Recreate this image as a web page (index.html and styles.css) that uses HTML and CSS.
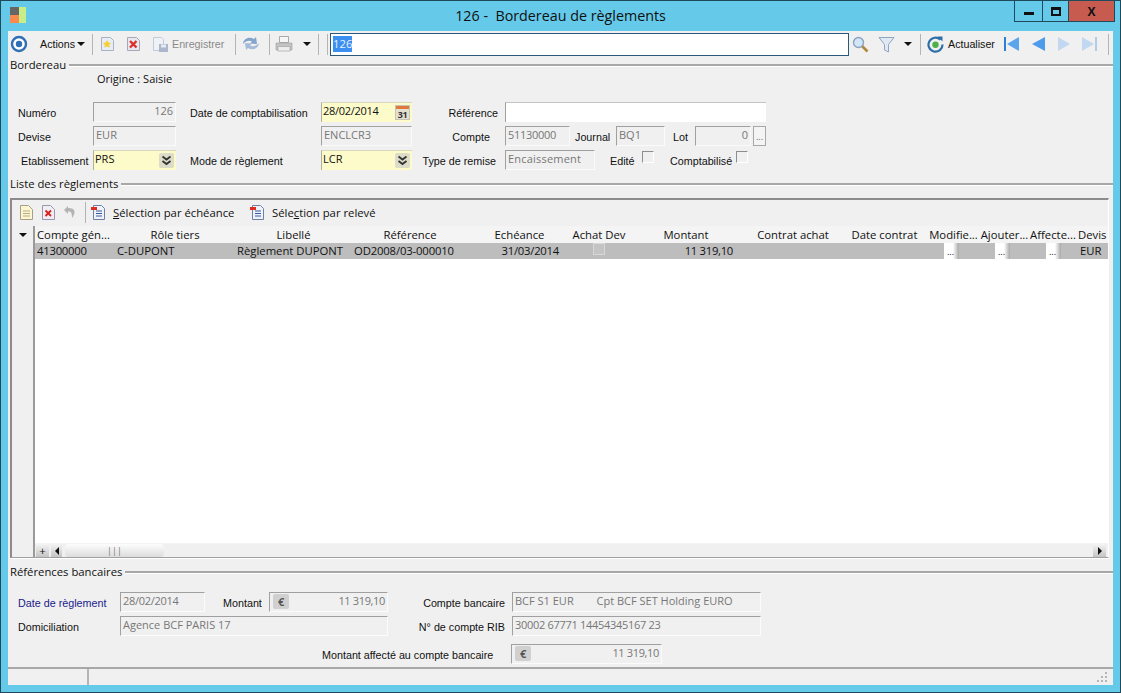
FILE: index.html
```html
<!DOCTYPE html>
<html lang="fr">

<head>
    <meta charset="UTF-8">
    <title>Bordereau de règlements</title>
    <link rel="stylesheet" href="styles.css">
</head>

<body>
    <div class="window">
        <!-- Title bar -->
        <header class="titlebar">
            <div class="logo"><span class="logo-a"></span><span class="logo-b"></span><span class="logo-c"></span></div>
            <div class="title">126 -&nbsp; Bordereau de règlements</div>
            <div class="controls">
                <div class="ctl ctl-min"><span></span></div>
                <div class="ctl ctl-max"><span></span></div>
                <div class="ctl ctl-close">X</div>
            </div>
        </header>

        <div class="client">
            <!-- Main toolbar -->
            <div class="toolbar">
                <svg class="ic i-target" width="18" height="18" viewBox="0 0 18 18"><circle cx="9" cy="9" r="7" fill="#fff" stroke="#2f6fb5" stroke-width="2.4"/><circle cx="9" cy="9" r="3.2" fill="#2f6fb5"/></svg>
                <span class="tb-text m-actions">Actions</span>
                <span class="caret m-caret1"></span>
                <span class="sep m-sep1"></span>
                <svg class="m-new" width="15" height="16" viewBox="0 0 15 16"><path d="M1.500 1.500h9l3 3v10h-12z" fill="#e8edf5" stroke="#a9b2c2"/><path d="M7 4l1.400 2.600 2.800.4-2 2 .5 2.800L7 10.500 4.300 11.800l.5-2.800-2-2 2.800-.4z" fill="#f5cf3a"/></svg>
                <svg class="m-del" width="15" height="16" viewBox="0 0 15 16"><path d="M1.500 1.500h9l3 3v10h-12z" fill="#e8e6ee" stroke="#a9a6b8"/><path d="M4 5l6.500 6.500M10.500 5L4 11.500" stroke="#d9302a" stroke-width="2.400"/></svg>
                <svg class="m-save" width="17" height="17" viewBox="0 0 17 17"><path d="M1.500 1.500h8l2 2v11h-10z" fill="#eef1f6" stroke="#c2cada"/><path d="M7 8h9v8H7z" fill="#a9b6cc"/><path d="M9 8.500h5v3H9z" fill="#e6ebf3"/></svg>
                <span class="tb-text off m-save-text">Enregistrer</span>
                <span class="sep m-sep2"></span>
                <svg class="m-sync" width="18" height="18" viewBox="0 0 18 18"><path d="M1 9c0-5 6-8 11-5l2-2 1 7-7-.5 2-2C7 5 4 6 1 9z" fill="#84a4cc"/><path d="M17 8c0 5-6 8-11 5l-2 2-1-7 7 .5-2 2c3 1.500 6 .5 9-2.500z" fill="#a5bcd8"/></svg>
                <span class="sep m-sep3"></span>
                <svg class="m-print" width="18" height="18" viewBox="0 0 18 18"><path d="M4.500 1.500h9v6h-9z" fill="#f6f6f6" stroke="#a8a8a8"/><path d="M1 8h16v7H1z" fill="#c4c4c4" stroke="#a0a0a0" stroke-width=".6"/><path d="M3 11.500h12v4.500H3z" fill="#ededed" stroke="#9c9c9c" stroke-width=".6"/></svg>
                <span class="caret m-caret2"></span>
                <span class="sep m-sep4"></span>
                <span class="sep m-sep5"></span>
                <div class="search"><span class="selected">126</span></div>
                <svg class="m-loupe" width="17" height="17" viewBox="0 0 17 17"><path d="M10 10l5.500 5.500" stroke="#b08a3a" stroke-width="2.600"/><circle cx="6.500" cy="6.500" r="5" fill="#d3e6f7" stroke="#8aa4bf" stroke-width="1.400"/></svg>
                <svg class="m-filter" width="17" height="17" viewBox="0 0 17 17"><path d="M1 1.500h15L10.500 8.500v7.500L6.500 14V8.500z" fill="#dfe8f3" stroke="#8fa6c2"/></svg>
                <span class="caret m-caret3"></span>
                <span class="sep m-sep6"></span>
                <svg class="m-refresh" width="17" height="17" viewBox="0 0 17 17"><path d="M13.500 3.800A7 7 0 1 0 15.500 8.500" fill="none" stroke="#2f6fa8" stroke-width="2.200"/><path d="M10.500 0.500h5v5z" fill="#2f6fa8"/><circle cx="8.500" cy="8.800" r="3.200" fill="#4fb04a"/></svg>
                <span class="tb-text m-refresh-text">Actualiser</span>
                <svg class="m-first" width="15" height="14" viewBox="0 0 15 14"><path d="M0 0h2v14H0z" fill="#2b7fd6"/><path d="M15 0v14L3 7z" fill="#5aa5ec"/></svg>
                <svg class="m-prev" width="13" height="14" viewBox="0 0 13 14"><path d="M13 0v14L0 7z" fill="#4d9bea"/></svg>
                <svg class="m-next" width="12" height="14" viewBox="0 0 12 14"><path d="M0 0v14l12-7z" fill="#c2d8f0"/></svg>
                <svg class="m-last" width="15" height="14" viewBox="0 0 15 14"><path d="M0 0v14l12-7z" fill="#c2d8f0"/><path d="M13 0h2v14h-2z" fill="#b2cbe8"/></svg>
                <span class="sep m-sep7"></span>
            </div>

            <!-- Bordereau -->
            <div class="legend"><span>Bordereau</span></div>
            <div class="origin">Origine : Saisie</div>
            <div class="form-grid">
                <label class="lbl">Numéro</label>
                <div class="field off right">126</div>
                <label class="lbl lbl-mid">Date de comptabilisation</label>
                <div class="field yellow num">28/02/2014
                    <svg class="cal" width="15" height="15" viewBox="0 0 15 15"><rect x="0.500" y="0.500" width="14" height="14" fill="#e4e0d0" stroke="#c8c4b4"/><rect x="1" y="1" width="13" height="3" fill="#e07a3c"/><text x="7.500" y="13" class="cal-num">31</text></svg>
                </div>
                <label class="lbl lbl-right">Référence</label>
                <div class="field white"></div>

                <label class="lbl">Devise</label>
                <div class="field off">EUR</div>
                <span></span>
                <div class="field off">ENCLCR3</div>
                <label class="lbl lbl-right lbl-compte">Compte</label>
                <div class="inline">
                    <div class="field off num w-compte">51130000</div>
                    <label class="lbl l-journal">Journal</label>
                    <div class="field off w-journal">BQ1</div>
                    <label class="lbl l-lot">Lot</label>
                    <div class="field off right w-lot">0</div>
                    <div class="dots-btn">...</div>
                </div>

                <label class="lbl lbl-etab">Etablissement</label>
                <div class="field yellow">PRS
                    <svg class="combo" width="15" height="15" viewBox="0 0 15 15"><rect width="15" height="15" rx="2" fill="#dcdcc8"/><path d="M3.500 3.500l4 3 4-3M3.500 8l4 3 4-3" fill="none" stroke="#333" stroke-width="1.800"/></svg>
                </div>
                <label class="lbl lbl-mid">Mode de règlement</label>
                <div class="field yellow">LCR
                    <svg class="combo" width="15" height="15" viewBox="0 0 15 15"><rect width="15" height="15" rx="2" fill="#dcdcc8"/><path d="M3.500 3.500l4 3 4-3M3.500 8l4 3 4-3" fill="none" stroke="#333" stroke-width="1.800"/></svg>
                </div>
                <label class="lbl lbl-right lbl-remise">Type de remise</label>
                <div class="inline">
                    <div class="field off w-remise">Encaissement</div>
                    <label class="lbl l-edite">Edité</label>
                    <span class="check"></span>
                    <label class="lbl l-compta">Comptabilisé</label>
                    <span class="check"></span>
                </div>
            </div>

            <!-- Liste des reglements -->
            <div class="legend legend-list"><span>Liste des règlements</span></div>
            <section class="list-frame">
                <div class="list-toolbar">
                    <svg class="l-new" width="13" height="15" viewBox="0 0 13 15"><path d="M.5.500h8l4 4v10H.5z" fill="#fdf6d0" stroke="#a5a08a"/><path d="M3 6h7M3 8.500h7M3 11h7" stroke="#b5ad88"/></svg>
                    <svg class="l-del" width="13" height="15" viewBox="0 0 13 15"><path d="M.5.500h8l4 4v10H.5z" fill="#f0eef4" stroke="#9a98aa"/><path d="M3.500 5.500l5.500 5.500M9 5.500L3.500 11" stroke="#d9201c" stroke-width="1.800"/></svg>
                    <svg class="l-undo" width="14" height="14" viewBox="0 0 14 14"><path d="M5 1L1 5l4 4V6.500c3-.5 4 1 4 6.500 4-5 4-10-4-10z" fill="#b4b4b4"/></svg>
                    <span class="sep l-sep"></span>
                    <svg class="l-sel1" width="15" height="15" viewBox="0 0 15 15"><path d="M2.500.5h8l3 3v11h-11z" fill="#eef2fa" stroke="#6f7fa6"/><path d="M5 6h6M5 8.500h6M5 11h6" stroke="#3c5a9a"/><path d="M0 2h6v3H0z" fill="#e02a22"/></svg>
                    <span class="list-btn l-t1"><u>S</u>élection par échéance</span>
                    <svg class="l-sel2" width="15" height="15" viewBox="0 0 15 15"><path d="M2.500.5h8l3 3v11h-11z" fill="#eef2fa" stroke="#6f7fa6"/><path d="M5 6h6M5 8.500h6M5 11h6" stroke="#3c5a9a"/><path d="M0 2h6v3H0z" fill="#e02a22"/></svg>
                    <span class="list-btn l-t2">Séle<u>c</u>tion par relevé</span>
                </div>

                <div class="list-body">
                    <div class="gutter"><span class="gutter-caret"></span></div>
                    <div class="table">
                        <div class="grid-row head">
                            <span class="c-left">Compte gén...</span>
                            <span>Rôle tiers</span>
                            <span>Libellé</span>
                            <span>Référence</span>
                            <span>Echéance</span>
                            <span>Achat Dev</span>
                            <span>Montant</span>
                            <span>Contrat achat</span>
                            <span>Date contrat</span>
                            <span>Modifie...</span>
                            <span>Ajouter...</span>
                            <span>Affecte...</span>
                            <span class="c-left">Devis</span>
                        </div>
                        <div class="grid-row line">
                            <span class="c-left c-num">41300000</span>
                            <span class="c-left c-tiers">C-DUPONT</span>
                            <span class="c-left c-lib">Règlement DUPONT</span>
                            <span class="c-left c-ref">OD2008/03-000010</span>
                            <span class="c-date">31/03/2014</span>
                            <span class="c-mid"><i class="check check-row"></i></span>
                            <span class="c-amount">11 319,10</span>
                            <span></span>
                            <span></span>
                            <span class="c-btn"><i class="cell-btn">...</i></span>
                            <span class="c-btn"><i class="cell-btn">...</i></span>
                            <span class="c-btn c-btn-last"><i class="cell-btn">...</i></span>
                            <span class="c-left c-eur">EUR</span>
                        </div>
                        <div class="table-empty"></div>
                        <div class="hscroll">
                            <span class="sb-btn sb-plus">+</span>
                            <span class="sb-btn sb-left"><i class="tri-left"></i></span>
                            <span class="sb-thumb">|||</span>
                            <span class="sb-btn sb-right"><i class="tri-right"></i></span>
                        </div>
                    </div>
                </div>
            </section>

            <!-- References bancaires -->
            <div class="legend legend-bank"><span>Références bancaires</span></div>
            <div class="bank-grid">
                <label class="lbl blue">Date de règlement</label>
                <div class="field off num">28/02/2014</div>
                <label class="lbl l-montant">Montant</label>
                <div class="field off right euro-field"><span class="euro">€</span>11 319,10</div>
                <label class="lbl lbl-right">Compte bancaire</label>
                <div class="field off">BCF S1 EUR &nbsp; &nbsp; &nbsp; &nbsp;Cpt BCF SET Holding EURO</div>

                <label class="lbl">Domiciliation</label>
                <div class="field off span-3">Agence BCF PARIS 17</div>
                <label class="lbl lbl-right">N° de compte RIB</label>
                <div class="field off num">30002 67771 14454345167 23</div>
            </div>
            <div class="bank-total">
                <label class="lbl">Montant affecté au compte bancaire</label>
                <div class="field off right euro-field w-total"><span class="euro">€</span>11 319,10</div>
            </div>

            <!-- Status bar -->
            <footer class="statusbar">
                <div class="status-cell"></div>
                <div class="status-rest">
                    <svg width="11" height="11" viewBox="0 0 11 11"><path d="M8 0h2v2H8zM4 4h2v2H4zM8 4h2v2H8zM0 8h2v2H0zM4 8h2v2H4zM8 8h2v2H8z" fill="#b5b5b5"/></svg>
                </div>
            </footer>
        </div>
    </div>
</body>

</html>
```
FILE: styles.css
```css
/* Basic layout */

* {
    box-sizing: border-box;
}

body {
    margin: 0;
    font-family: "Open Sans", "Liberation Sans", sans-serif;
    font-size: 11.3px;
    color: #111;
    overflow: hidden;
}

.window {
    width: 1121px;
    height: 693px;
    background-color: #65c9ea;
    border: 1px solid #1f4a5c;
    display: flex;
    flex-direction: column;
    padding: 0 7px 7px;
}

/* Title bar */

.titlebar {
    height: 30px;
    flex: none;
    display: grid;
    grid-template-columns: 1fr auto 1fr;
}

.logo {
    width: 16px;
    height: 16px;
    margin: 6px 0 0 2px;
    display: grid;
    grid-template-columns: 9px 7px;
    grid-template-rows: 8px 8px;
}

.logo-a { background-color: #666; }
.logo-b { background-color: #c8ee88; grid-row: 1 / 3; grid-column: 2; }
.logo-c { background-color: #f98a4d; }

.title {
    font-size: 14.3px;
    line-height: 30px;
    color: #111;
}

.controls {
    justify-self: end;
    display: flex;
    height: 21px;
    border: 1px solid #1f4a5c;
    border-top: 0;
    margin-right: -2px;
}

.ctl {
    display: flex;
    align-items: center;
    justify-content: center;
    border-left: 1px solid #1f4a5c;
}

.ctl-min { width: 27px; border-left: 0; }
.ctl-max { width: 26px; }
.ctl-close {
    width: 46px;
    background-color: #c75b50;
    font-weight: 700;
    font-size: 12px;
}

.ctl-min span {
    width: 10px;
    height: 3px;
    background-color: #111;
    margin-top: 5px;
}

.ctl-max span {
    width: 10px;
    height: 9px;
    border: 2px solid #111;
    border-top-width: 3px;
}

.client {
    flex: 1;
    background-color: #f0f0f0;
    display: flex;
    flex-direction: column;
    min-height: 0;
}

/* Toolbar */

.toolbar {
    height: 28px;
    flex: none;
    display: flex;
    align-items: center;
    padding: 0 0 2px 2px;
}

.toolbar svg,
.list-toolbar svg {
    flex: none;
    display: block;
}

.tb-text {
    white-space: nowrap;
    font-family: "Liberation Sans", sans-serif;
    font-size: 10.7px;
    flex: none;
}

.off { color: #8a8a8a; }

.caret {
    width: 0;
    height: 0;
    flex: none;
    border-style: solid;
    border-width: 4px 4px 0;
    border-color: #111 transparent transparent;
}

.sep {
    width: 1px;
    height: 21px;
    flex: none;
    background-color: #b4b4b4;
}

.m-actions { margin-left: 12px; width: 36px; }
.m-caret1 { margin-left: 1px; }
.m-sep1 { margin-left: 7px; }
.m-new { margin-left: 7px; }
.m-del { margin-left: 11px; }
.m-save { margin-left: 11px; }
.m-save-text { margin-left: 3px; width: 54px; }
.m-sep2 { margin-left: 9px; }
.m-sync { margin-left: 6px; }
.m-sep3 { margin-left: 9px; }
.m-print { margin-left: 5px; }
.m-caret2 { margin-left: 10px; }
.m-sep4 { margin-left: 7px; }
.m-sep5 { margin-left: 8px; }

.search {
    width: 519px;
    height: 23px;
    margin-left: 2px;
    flex: none;
    background-color: #fff;
    border: 1px solid #2a5a7a;
    padding: 2px 2px;
    line-height: 16px;
}

.selected {
    display: inline-block;
    background-color: #3b8ff0;
    color: #e8f2ff;
}

.m-loupe { margin-left: 3px; }
.m-filter { margin-left: 9px; }
.m-caret3 { margin-left: 9px; }
.m-sep6 { margin-left: 8px; }
.m-refresh { margin-left: 6px; }
.m-refresh-text { margin-left: 4px; width: 48px; }
.m-first { margin-left: 8px; }
.m-prev { margin-left: 13px; }
.m-next { margin-left: 13px; }
.m-last { margin-left: 12px; }
.m-sep7 { margin-left: 11px; }

/* Group headings */

.legend {
    height: 12px;
    flex: none;
    display: flex;
    align-items: center;
    padding-left: 2px;
    line-height: 12px;
}

.legend::after {
    content: "";
    flex: 1;
    height: 2px;
    margin-left: 3px;
    background-color: #a8a8a8;
    border-bottom: 1px solid #fff;
}

.legend-list { margin-top: 8px; }
.legend-bank { margin-top: 8px; }

.origin {
    height: 31px;
    flex: none;
    padding: 1px 0 0 89px;
    line-height: 14px;
    font-size: 11px;
}

/* Form fields */

.form-grid {
    display: grid;
    grid-template-columns: 85px 83px 145px 91px 93px 261px;
    grid-auto-rows: 20px;
    row-gap: 4px;
    flex: none;
}

.lbl {
    font-family: "Liberation Sans", sans-serif;
    font-size: 10.75px;
    line-height: 22px;
    white-space: nowrap;
    padding-left: 10px;
}

.lbl-mid { padding-left: 14px; }
.form-grid > span { display: block; }

.lbl-right {
    text-align: right;
    padding: 0 7px 0 0;
}

.lbl-etab { padding-left: 13px; }
.lbl-compte { padding-right: 15px; }
.lbl-remise { padding-right: 9px; }

.field {
    height: 20px;
    padding: 0 2px;
    line-height: 15px;
    position: relative;
    white-space: nowrap;
    overflow: hidden;
    font-size: 11px;
}

.field.num { letter-spacing: -.3px; }

.field.off {
    color: #777;
    background-color: #f0f0f0;
    border: 1px solid;
    border-color: #a0a0a0 #fbfbfb #fbfbfb #a0a0a0;
}

.field.right { text-align: right; }

.field.white {
    background-color: #fff;
    border-top: 1px solid #c4c4c4;
    border-left: 1px solid #a0a0a0;
}

.field.yellow {
    background-color: #fdfbc9;
    color: #111;
    border-left: 1px solid #b0b0a0;
    border-top: 1px solid #d8d8c0;
    padding-left: 1px;
}

.cal {
    position: absolute;
    right: 2px;
    top: 2px;
}

.cal-num {
    font-size: 9px;
    font-weight: 700;
    text-anchor: middle;
    fill: #333;
}

.combo {
    position: absolute;
    right: 2px;
    top: 2px;
}

.inline {
    display: flex;
    align-items: flex-start;
}

.inline .lbl { padding-left: 0; }

.w-compte { width: 65px; flex: none; }
.w-journal { width: 49px; flex: none; }
.w-lot { width: 56px; flex: none; }
.w-remise { width: 90px; flex: none; letter-spacing: .2px; }
.l-journal { width: 41px; margin-left: 5px; }
.l-lot { width: 22px; margin-left: 8px; }
.l-edite { width: 32px; margin-left: 15px; flex: none; }
.l-compta { width: 66px; margin-left: 16px; flex: none; }

.dots-btn {
    width: 13px;
    height: 20px;
    margin-left: 2px;
    border: 1px solid #a8a8a8;
    background-color: #f4f4f4;
    text-align: center;
    color: #666;
    font-size: 9px;
    line-height: 20px;
    flex: none;
}

.check {
    display: block;
    width: 12px;
    height: 12px;
    flex: none;
    margin-top: 1px;
    border: 1px solid;
    border-color: #8e8e8e #fff #fff #8e8e8e;
}

/* List of payments */

.list-frame {
    height: 360px;
    flex: none;
    margin: 8px 4px 0 2px;
    border-top: 2px solid #8c8c8c;
    border-left: 2px solid #8c8c8c;
    border-bottom: 1px solid #a0a0a0;
    border-right: 1px solid #fff;
    display: flex;
    flex-direction: column;
    box-shadow: 0 1px 0 #fff;
}

.list-toolbar {
    height: 26px;
    flex: none;
    display: flex;
    align-items: center;
    padding: 0 0 2px 8px;
}

.l-del { margin-left: 9px; }
.l-undo { margin-left: 8px; }
.l-sep { margin-left: 8px; }
.l-sel1 { margin-left: 5px; }
.l-t1 { margin-left: 7px; width: 122px; flex: none; }
.l-sel2 { margin-left: 15px; }
.l-t2 { margin-left: 7px; }
.list-btn { white-space: nowrap; }

.list-body {
    flex: 1;
    display: flex;
    min-height: 0;
}

.gutter {
    width: 23px;
    flex: none;
    border-right: 2px solid #9a9a9a;
    padding: 7px 0 0 7px;
}

.gutter-caret {
    display: block;
    width: 0;
    height: 0;
    border-style: solid;
    border-width: 4px 4px 0;
    border-color: #111 transparent transparent;
}

.table {
    flex: 1;
    display: flex;
    flex-direction: column;
    min-width: 0;
}

.grid-row {
    display: grid;
    grid-template-columns: 80px 120px 117px 116px 103px 56px 118px 96px 87px 51px 51px 46px 31px;
    flex: none;
    white-space: nowrap;
}

.grid-row > span {
    text-align: center;
}

.head {
    height: 17px;
    line-height: 17px;
    background-color: #f4f4f4;
}

.line {
    height: 16px;
    line-height: 15px;
    background-color: #bdbdbd;
}

.grid-row > .c-left { text-align: left; padding-left: 2px; }
.grid-row > .c-ref { letter-spacing: -.15px; }
.grid-row > .c-date { text-align: right; padding-right: 12px; letter-spacing: -.25px; }
.grid-row > .c-amount { text-align: right; padding-right: 12px; letter-spacing: -.3px; }
.grid-row > .c-num { letter-spacing: -.25px; }
.grid-row > .c-eur { padding-left: 4px; }

.c-mid {
    display: flex;
    justify-content: center;
}

.check-row {
    width: 12px;
    height: 12px;
    margin: 0;
    border: 1px solid #d8d8d8;
    background-color: #c4c4c4;
}

.grid-row > .c-btn {
    display: flex;
    justify-content: flex-end;
    padding-right: 20px;
}

.grid-row > .c-btn-last { padding-right: 15px; }

.cell-btn {
    width: 15px;
    height: 16px;
    flex: none;
    background: linear-gradient(to right, #fff 60%, #a8a8a8);
    font-style: normal;
    font-size: 9px;
    line-height: 17px;
    text-align: left;
    padding-left: 3px;
}

.table-empty {
    flex: 1;
    background-color: #fff;
}

/* Horizontal scroll bar */

.hscroll {
    height: 14px;
    flex: none;
    display: flex;
    align-items: stretch;
    background-color: #f0f0f0;
    padding-left: 1px;
    border-top: 1px solid #f4f4f4;
}

.sb-btn {
    width: 13px;
    flex: none;
    background: linear-gradient(#f4f4f4, #c4c4c4);
    display: flex;
    align-items: center;
    justify-content: center;
    line-height: 12px;
}

.sb-left { margin-left: 2px; width: 11px; }

.sb-thumb {
    width: 99px;
    margin-left: 3px;
    background: linear-gradient(#fdfdfd, #dcdcdc);
    border-radius: 4px;
    text-align: center;
    color: #777;
    font-size: 9px;
    line-height: 13px;
}

.sb-right { margin-left: auto; margin-right: 2px; }

.tri-left,
.tri-right {
    width: 0;
    height: 0;
    border-style: solid;
    border-width: 4px 0 4px 4px;
    border-color: transparent transparent transparent #111;
}

.tri-left { border-width: 4px 4px 4px 0; border-color: transparent #111 transparent transparent; }

/* Bank references */

.bank-grid {
    display: grid;
    grid-template-columns: 112px 85px 64px 119px 124px 249px;
    grid-auto-rows: 20px;
    row-gap: 4px;
    margin-top: 14px;
    flex: none;
}

.blue { color: #1a1a8c; }
.l-montant { padding-left: 18px; }
.span-3 { grid-column: span 3; }

.euro-field { padding-left: 3px; letter-spacing: -.35px; }

.euro {
    float: left;
    width: 16px;
    height: 15px;
    margin-top: 1px;
    background-color: #d0d0d0;
    border-radius: 2px;
    text-align: center;
    color: #555;
    font-weight: 700;
}

.bank-total {
    display: flex;
    height: 20px;
    margin-top: 8px;
    padding-left: 304px;
    flex: none;
}

.bank-total .lbl { width: 199px; flex: none; padding-left: 10px; }
.w-total { width: 151px; flex: none; }

/* Status bar */

.statusbar {
    flex: 1;
    display: flex;
    margin-top: 3px;
    border-top: 2px solid #a8a8a8;
    min-height: 0;
}

.status-cell {
    width: 81px;
    flex: none;
    border-right: 2px solid #b4b4b4;
}

.status-rest {
    flex: 1;
    display: flex;
    justify-content: flex-end;
    align-items: flex-end;
    padding: 0 5px 2px 0;
}
```
